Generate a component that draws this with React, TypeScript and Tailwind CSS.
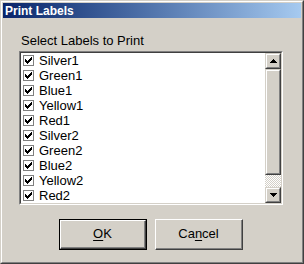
// Classic Win2000-style "Print Labels" dialog: checked list box with a
// vertical scrollbar and OK / Cancel buttons.

const LABELS = [
  "Silver1",
  "Green1",
  "Blue1",
  "Yellow1",
  "Red1",
  "Silver2",
  "Green2",
  "Blue2",
  "Yellow2",
  "Red2",
];

function CheckBox() {
  return (
    <span className="flex h-[11px] w-[11px] shrink-0 items-center justify-center border border-[#808080] bg-white">
      <svg width="7" height="7" viewBox="0 0 7 7" shapeRendering="crispEdges">
        <path
          d="M6 0h1v1h-1zM5 1h2v1h-2zM0 2h1v1h-1zM4 2h3v1h-3zM0 3h2v1h-2zM3 3h3v1h-3zM0 4h5v1h-5zM1 5h3v1h-3zM2 6h1v1h-1z"
          fill="#000"
        />
      </svg>
    </span>
  );
}

function ArrowButton({ up }: { up?: boolean }) {
  return (
    <div className="flex h-[16px] w-[16px] shrink-0 items-center justify-center border-t border-l border-t-[#d4d0c8] border-l-[#d4d0c8] border-b border-r border-b-[#404040] border-r-[#404040] bg-[#d4d0c8]">
      <div className="flex h-full w-full items-center justify-center border-t border-l border-t-white border-l-white border-b border-r border-b-[#808080] border-r-[#808080]">
        <svg width="7" height="4" viewBox="0 0 7 4" shapeRendering="crispEdges">
          <path d={up ? "M3 0h1v1h1v1h1v1h1v1h-7v-1h1v-1h1v-1h1z" : "M0 0h7v1h-1v1h-1v1h-1v1h-1v-1h-1v-1h-1v-1h-1z"} fill="#000" />
        </svg>
      </div>
    </div>
  );
}

function Scrollbar() {
  return (
    <div className="flex w-[16px] shrink-0 flex-col">
      <ArrowButton up />
      <div className="flex h-[106px] shrink-0 border-t border-l border-t-[#d4d0c8] border-l-[#d4d0c8] border-b border-r border-b-[#404040] border-r-[#404040] bg-[#d4d0c8]">
        <div className="h-full w-full border-t border-l border-t-white border-l-white border-b border-r border-b-[#808080] border-r-[#808080]" />
      </div>
      <div className="flex-1 bg-[repeating-conic-gradient(#ffffff_0_25%,#d4d0c8_0_50%)] bg-[length:2px_2px]" />
      <ArrowButton />
    </div>
  );
}

function Button({ label, mnemonic, isDefault }: { label: string; mnemonic: number; isDefault?: boolean }) {
  return (
    <div className={`h-[31px] w-[88px] ${isDefault ? "border border-black" : ""}`}>
      <div className="h-full w-full border-t border-l border-t-white border-l-white border-b border-r border-b-[#404040] border-r-[#404040]">
        <div className="flex h-full w-full items-center justify-center border-b border-r border-b-[#808080] border-r-[#808080] bg-[#d4d0c8]">
          <span className="text-[13px] text-black">
            {label.slice(0, mnemonic)}
            <span className="underline underline-offset-2">{label[mnemonic]}</span>
            {label.slice(mnemonic + 1)}
          </span>
        </div>
      </div>
    </div>
  );
}

export default function App() {
  return (
    <div className="h-[264px] w-[304px] border-t border-l border-t-[#d4d0c8] border-l-[#d4d0c8] border-b border-r border-b-[#404040] border-r-[#404040] bg-[#d4d0c8] font-['Liberation_Sans',Arial,sans-serif]">
      <div className="flex h-full w-full flex-col border-t border-l border-t-white border-l-white border-b border-r border-b-[#808080] border-r-[#808080] p-px">
        {/* Title bar */}
        <div className="flex h-[15px] shrink-0 items-center bg-gradient-to-r from-[#0a246a] to-[#a6caf0] pl-[2px]">
          <span className="text-[12px] font-bold leading-none text-white">Print Labels</span>
        </div>

        <div className="flex flex-col pl-[16px] pt-[16px]">
          <p className="pl-[2px] text-[13px] leading-[14px] text-black">Select Labels to Print</p>

          {/* Checked list box */}
          <div className="mt-[3px] w-[264px] border-t border-l border-t-[#808080] border-l-[#808080] border-b border-r border-b-white border-r-white">
            <div className="flex h-[152px] border-t border-l border-t-[#404040] border-l-[#404040] border-b border-r border-b-[#d4d0c8] border-r-[#d4d0c8] bg-white">
              <ul className="flex-1">
                {LABELS.map((l) => (
                  <li key={l} className="flex h-[15px] items-center gap-[5px] pl-[2px] text-[13px] text-black">
                    <CheckBox />
                    <span>{l}</span>
                  </li>
                ))}
              </ul>
              <Scrollbar />
            </div>
          </div>

          {/* Buttons */}
          <div className="mt-[14px] flex gap-[8px] pl-[40px]">
            <Button label="OK" mnemonic={0} isDefault />
            <Button label="Cancel" mnemonic={2} />
          </div>
        </div>
      </div>
    </div>
  );
}
